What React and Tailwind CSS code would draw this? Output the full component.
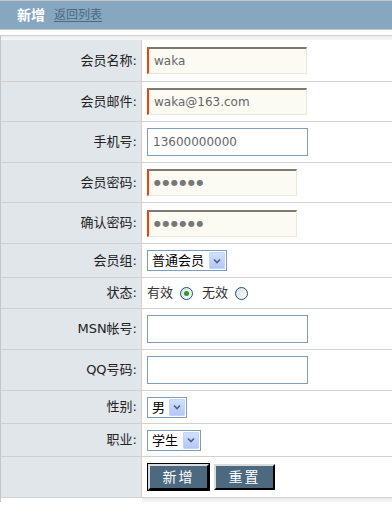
import React from 'react';

const cjk = { fontFamily: '"DejaVu Sans", "Noto Sans CJK SC", sans-serif' };

const rows = [
  { label: '会员名称:', h: 'h-[42px]', field: 'hot', value: 'waka', w: 'w-[160px]' },
  { label: '会员邮件:', h: 'h-[40px]', field: 'hot', value: 'waka@163.com', w: 'w-[160px]' },
  { label: '手机号:', h: 'h-[41px]', field: 'text', value: '13600000000' },
  { label: '会员密码:', h: 'h-[40px]', field: 'hot', value: '●●●●●●', w: 'w-[150px]', pw: true },
  { label: '确认密码:', h: 'h-[41px]', field: 'hot', value: '●●●●●●', w: 'w-[150px]', pw: true },
  { label: '会员组:', h: 'h-[34px]', field: 'select', value: '普通会员', w: 'w-[80px]' },
  { label: '状态:', h: 'h-[31px]', field: 'radio' },
  { label: 'MSN帐号:', h: 'h-[41px]', field: 'text', value: '' },
  { label: 'QQ号码:', h: 'h-[41px]', field: 'text', value: '' },
  { label: '性别:', h: 'h-[33px]', field: 'select', value: '男', w: 'w-[40px]' },
  { label: '职业:', h: 'h-[33px]', field: 'select', value: '学生', w: 'w-[54px]' },
  { label: '', h: 'h-[41px]', field: 'buttons' },
];

const HotInput = ({ value, w, pw }) => (
  <div
    className={`${w} h-[27px] flex items-center bg-[#fbfbf3] border-t-2 border-t-[#7c796e] border-l-2 border-l-[#ff3c00] border-r border-r-[#ebe9dc] border-b border-b-[#ebe9dc] pl-[5px]`}
  >
    <span className={pw ? 'text-[#777] text-[8px] tracking-[1.5px]' : 'text-[#666] text-[12px]'}>{value}</span>
  </div>
);

const TextInput = ({ value }) => (
  <div className="w-[161px] h-[28px] flex items-center bg-white border border-[#7f9db9] pl-[5px]">
    <span className="text-[#666] text-[12px]">{value}</span>
  </div>
);

const Select = ({ value, w }) => (
  <div className={`${w} h-[21px] flex items-center justify-between bg-white border border-[#7f9db9] pl-[4px] pr-[1px]`}>
    <span className="text-[13px] text-black leading-none" style={cjk}>{value}</span>
    <div className="w-[16px] h-[17px] rounded-[1px] bg-gradient-to-b from-[#d2e0fd] to-[#b3c7f5] border border-[#c3d3fd] flex items-center justify-center">
      <svg width="8" height="6" viewBox="0 0 8 6">
        <path d="M1 1.5 L4 4.5 L7 1.5" fill="none" stroke="#4d6185" strokeWidth="1.6" />
      </svg>
    </div>
  </div>
);

const Radio = ({ checked }) => (
  <div className="w-[13px] h-[13px] rounded-full border border-[#1c5180] bg-gradient-to-br from-[#dcdcd7] to-white flex items-center justify-center">
    {checked && <div className="w-[5px] h-[5px] rounded-full bg-[#21a121]" />}
  </div>
);

const Btn = ({ children, focused }) => (
  <div className={focused ? 'border border-black' : 'border border-transparent'}>
    <div className="w-[61px] h-[26px] flex items-center justify-center bg-[#4d697f] border-t-2 border-l-2 border-t-[#dcdcdc] border-l-[#dcdcdc] border-b-2 border-r-2 border-b-black border-r-black">
      <span className="text-white text-[14px] tracking-[2px]" style={cjk}>{children}</span>
    </div>
  </div>
);

const Field = ({ row }) => {
  if (row.field === 'hot') return <HotInput {...row} />;
  if (row.field === 'text') return <TextInput {...row} />;
  if (row.field === 'select') return <Select {...row} />;
  if (row.field === 'radio')
    return (
      <div className="flex items-center text-[13px] text-[#333]" style={cjk}>
        <span>有效</span>
        <span className="ml-[7px]"><Radio checked /></span>
        <span className="ml-[9px]">无效</span>
        <span className="ml-[7px]"><Radio /></span>
      </div>
    );
  return (
    <div className="flex items-center gap-[3px]">
      <Btn focused>新增</Btn>
      <Btn>重置</Btn>
    </div>
  );
};

export default function App() {
  return (
    <div className="w-[392px] h-[513px] bg-white overflow-hidden" style={cjk}>
      <div className="h-[30px] border-t border-b border-[#c6c6c6] bg-[#87a6bf] flex items-center pl-[17px]">
        <span className="text-white font-bold text-[14px]">新增</span>
        <span className="ml-[9px] text-[12px] text-[#4b6983] underline underline-offset-2">返回列表</span>
      </div>

      <div className="mt-[5px] border-t border-t-[#cfcfcf] border-l border-l-[#c6c6c6]">
        <div className="h-[4px] bg-gradient-to-b from-[#ececec] to-[#f6f6f6]" />
        {rows.map((row, i) => (
          <div key={i} className={`${row.h} flex border-b border-b-[#d0d0d0]`}>
            <div className="w-[141px] shrink-0 bg-[#e1e6eb] border-r border-r-[#d0d0d0] flex items-center justify-end pr-[4px] text-[13px] text-[#222]">
              {row.label}
            </div>
            <div className="flex-1 flex items-center pl-[5px]">
              <Field row={row} />
            </div>
          </div>
        ))}
        <div className="h-[4px] flex">
          <div className="w-[141px] bg-white" />
          <div className="flex-1 bg-gradient-to-b from-[#ececec] to-[#f8f8f8]" />
        </div>
      </div>
    </div>
  );
}
